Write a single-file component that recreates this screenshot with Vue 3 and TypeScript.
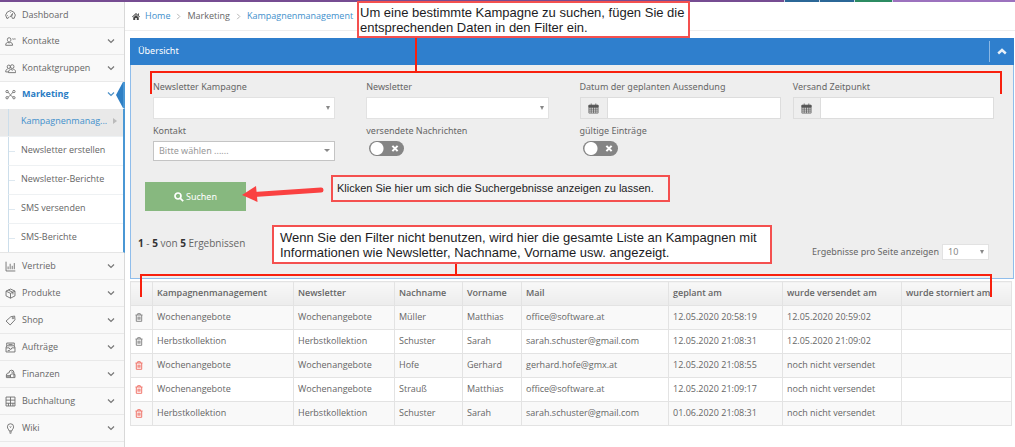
<script setup lang="ts">
import { ref } from 'vue'

interface NavItem { id: string; label: string }
interface Row { sent: boolean; cells: string[] }

const navTop: NavItem[] = [
  { id: 'dashboard', label: 'Dashboard' },
  { id: 'contact', label: 'Kontakte' },
  { id: 'group', label: 'Kontaktgruppen' },
  { id: 'marketing', label: 'Marketing' },
]
const subItems: string[] = ['Kampagnenmanag...', 'Newsletter erstellen', 'Newsletter-Berichte', 'SMS versenden', 'SMS-Berichte']
const navBottom: NavItem[] = [
  { id: 'sales', label: 'Vertrieb' },
  { id: 'product', label: 'Produkte' },
  { id: 'shop', label: 'Shop' },
  { id: 'orders', label: 'Aufträge' },
  { id: 'finance', label: 'Finanzen' },
  { id: 'accounting', label: 'Buchhaltung' },
  { id: 'wiki', label: 'Wiki' },
]
const icons: Record<string, string> = {
  dashboard: 'M4.500 13.500H2.6A6.8 6.8 0 1 1 13.400 13.500H10.500M4.500 13.500a2 2 0 0 1 2-2M10.500 13.500a2 2 0 0 0-1-2L11 6.500 7.600 11.500M3.200 9.500h1M8 4.200v1',
  contact: 'M6 2.5a2.6 2.8 0 0 1 2.6 2.8C8.600 7 7.500 8.600 6 8.600S3.400 7 3.400 5.300A2.600 2.800 0 0 1 6 2.500M1 13.500c0-3 1.500-4 3.500-4.600L6 10.500l1.500-1.600c2 .6 3.500 1.600 3.500 4.600zM10.500 4.500c1-1.500 2 1 3 0s1.500 0 2 0',
  group: 'M5.500 3a2.300 2.500 0 1 1 0 5 2.300 2.500 0 1 1 0-5M1 13c0-3 1.500-4 3-4.500M10.500 2.500a2.500 2.700 0 1 1 0 5.500 2.500 2.700 0 1 1 0-5.500M5 14c0-3.500 2-4.500 3.500-5l2 1.500 2-1.500c2 .8 3 2 3 5zM1 13h4',
  marketing: 'M3 2a1.700 1.700 0 1 1 0 3.400A1.700 1.700 0 0 1 3 2M13 2a1.700 1.700 0 1 1 0 3.400A1.700 1.700 0 0 1 13 2M3 11a1.700 1.700 0 1 1 0 3.400A1.700 1.700 0 0 1 3 11M13 11a1.700 1.700 0 1 1 0 3.400A1.700 1.700 0 0 1 13 11M4.500 4.500C6 5.500 6 7.500 8 8.500M11.500 4.500C10 5.500 10 7.500 8 8.500M4.500 11.500C6 11.500 7 10 8 8.500M11.500 11.500C10 11.500 9 10 8 8.500',
  sales: 'M1.500 1v13.500H15M4.500 12V8M7.500 12V4M10.500 12V7M13.500 12V3',
  product: 'M8 1.500 14.500 4.500v7L8 14.800 1.500 11.500v-7zM1.500 4.500 8 7.800l6.500-3.300M8 7.800v7M4.800 3 11.500 6.300v3',
  shop: 'M8.500 2.500 14 1.500 14.500 7 7.500 14.500 1.500 8.800zM11.500 3.500a1 1 0 1 1 0 2 1 1 0 0 1 0-2',
  orders: 'M2.500 1.500h11v4h-11zM5 3.500h6M2.500 5.500 1.500 8v6.500h13V8l-1-2.500M1.500 8.500H6l1 2h2l1-2h4.500M4 12.500h3',
  finance: 'M6 5.500a3.500 3.500 0 0 1 7-.5v6.500M6 5.500a4 4 0 0 0-4 3v4h12.500V8M2 8.500c2 1.500 5 1.500 6 0s3-2 6.500-.5M2 10.500h6M8 8.500v4M9 4c1 1 3 1 4 0',
  accounting: 'M1.500 1.500h13v13h-13zM1.500 6h13M1.500 10.500h13M8 1.500v13M5 10.500v4M11.500 10.500v4',
  wiki: 'M6 11.500C6 9.500 3.500 8.500 3.500 5.600a4.500 4.500 0 0 1 9 0c0 2.900-2.500 3.900-2.500 5.900zM6 13h4M6.800 14.800h2.400M7 5l1 1.500L9 5',
}
const columns = ['', 'Kampagnenmanagement', 'Newsletter', 'Nachname', 'Vorname', 'Mail', 'geplant am', 'wurde versendet am', 'wurde storniert am']
const rows: Row[] = [
  { sent: true, cells: ['Wochenangebote', 'Wochenangebote', 'Müller', 'Matthias', 'office@software.at', '12.05.2020 20:58:19', '12.05.2020 20:59:02', ''] },
  { sent: true, cells: ['Herbstkollektion', 'Herbstkollektion', 'Schuster', 'Sarah', 'sarah.schuster@gmail.com', '12.05.2020 21:08:31', '12.05.2020 21:09:02', ''] },
  { sent: false, cells: ['Wochenangebote', 'Wochenangebote', 'Hofe', 'Gerhard', 'gerhard.hofe@gmx.at', '12.05.2020 21:08:55', 'noch nicht versendet', ''] },
  { sent: false, cells: ['Wochenangebote', 'Wochenangebote', 'Strauß', 'Matthias', 'office@software.at', '12.05.2020 21:09:17', 'noch nicht versendet', ''] },
  { sent: false, cells: ['Herbstkollektion', 'Herbstkollektion', 'Schuster', 'Sarah', 'sarah.schuster@gmail.com', '01.06.2020 21:08:31', 'noch nicht versendet', ''] },
]
const sentMessages = ref(false)
const validEntries = ref(false)
</script>

<template>
  <div class="page">
    <div class="topbar"><i class="t-purple"></i><i class="t-blue"></i><i class="t-blue"></i><i class="t-green"></i><i class="t-lilac"></i></div>
    <div class="layout">
      <nav class="sidebar">
        <a v-for="n in navTop" :key="n.id" href="#" class="nav" :class="{ current: n.id === 'marketing', first: n.id === 'dashboard' }">
          <svg class="nav-icon" viewBox="0 0 16 16"><path :d="icons[n.id]" /></svg>
          <span>{{ n.label }}</span>
          <svg v-if="n.id !== 'dashboard'" class="chev" viewBox="0 0 8 6"><path d="M1 1.500 4 4.500 7 1.500" /></svg>
        </a>
        <div class="submenu">
          <a v-for="(s, i) in subItems" :key="s" href="#" class="sub" :class="{ active: i === 0 }">
            <span>{{ s }}</span>
            <svg v-if="i === 0" class="tri" viewBox="0 0 4 6"><path d="M0 0 4 3 0 6z" /></svg>
          </a>
        </div>
        <a v-for="n in navBottom" :key="n.id" href="#" class="nav">
          <svg class="nav-icon" viewBox="0 0 16 16"><path :d="icons[n.id]" /></svg>
          <span>{{ n.label }}</span>
          <svg class="chev" viewBox="0 0 8 6"><path d="M1 1.500 4 4.500 7 1.500" /></svg>
        </a>
      </nav>

      <main class="main">
        <div class="crumbs">
          <svg class="home" viewBox="0 0 16 14"><path d="M8 0 16 7.500 14.800 8.700 8 2.500 1.200 8.700 0 7.500zM8 4l5.500 5v5H9.500v-4h-3v4h-4V9zM12 1h2v4l-2-2z" /></svg>
          <a href="#">Home</a>
          <svg class="sep" viewBox="0 0 5 8"><path d="M1 1 4 4 1 7" /></svg>
          <span>Marketing</span>
          <svg class="sep" viewBox="0 0 5 8"><path d="M1 1 4 4 1 7" /></svg>
          <a href="#">Kampagnenmanagement</a>
        </div>

        <section class="panel">
          <header class="panel-head">
            <h1>Übersicht</h1>
            <button type="button" class="collapse" aria-label="Einklappen">
              <svg viewBox="0 0 10 7"><path d="M1.200 5.500 5 2l3.800 3.500" /></svg>
            </button>
          </header>
          <form class="panel-body" @submit.prevent>
            <div class="fields">
              <div class="field">
                <label for="campaign">Newsletter Kampagne</label>
                <div class="select"><select id="campaign"><option></option></select></div>
              </div>
              <div class="field">
                <label for="newsletter">Newsletter</label>
                <div class="select"><select id="newsletter"><option></option></select></div>
              </div>
              <div class="field">
                <label for="planned">Datum der geplanten Aussendung</label>
                <div class="date">
                  <span class="addon"><svg viewBox="0 0 12 12"><path d="M1 2.500h10v8.500H1zM1 4.500h10M1 6.700h10M1 8.800h10M3.500 4.500V11M6 4.500V11M8.500 4.500V11M3.500.5v3M8.500.5v3" /><path d="M1 2.500h10v2H1z" class="solid" /></svg></span>
                  <input id="planned" type="text" />
                </div>
              </div>
              <div class="field">
                <label for="sendtime">Versand Zeitpunkt</label>
                <div class="date">
                  <span class="addon"><svg viewBox="0 0 12 12"><path d="M1 2.500h10v8.500H1zM1 4.500h10M1 6.700h10M1 8.800h10M3.500 4.500V11M6 4.500V11M8.500 4.500V11M3.500.5v3M8.500.5v3" /><path d="M1 2.500h10v2H1z" class="solid" /></svg></span>
                  <input id="sendtime" type="text" />
                </div>
              </div>
              <div class="field">
                <label for="contact">Kontakt</label>
                <div class="select chosen"><select id="contact"><option>Bitte wählen ......</option></select></div>
              </div>
              <div class="field">
                <label for="sent">versendete Nachrichten</label>
                <div class="switch">
                  <input id="sent" v-model="sentMessages" type="checkbox" />
                  <svg viewBox="0 0 8 8"><path d="M1 1 7 7M7 1 1 7" /></svg>
                </div>
              </div>
              <div class="field">
                <label for="valid">gültige Einträge</label>
                <div class="switch">
                  <input id="valid" v-model="validEntries" type="checkbox" />
                  <svg viewBox="0 0 8 8"><path d="M1 1 7 7M7 1 1 7" /></svg>
                </div>
              </div>
            </div>
            <button type="submit" class="search">
              <svg viewBox="0 0 10 10"><circle cx="4" cy="4" r="3" /><path d="M6.300 6.300 9.200 9.200" /></svg>Suchen
            </button>
            <div class="summary">
              <div class="count"><b>1</b> - <b>5</b> von <b>5</b> Ergebnissen</div>
              <div class="perpage">
                <label for="perpage">Ergebnisse pro Seite anzeigen</label>
                <div class="select small"><select id="perpage"><option>10</option></select></div>
              </div>
            </div>
          </form>
        </section>

        <table class="grid">
          <colgroup><col v-for="(c, i) in columns" :key="i" :class="'c' + i" /></colgroup>
          <thead>
            <tr><th v-for="(c, i) in columns" :key="i">{{ c }}</th></tr>
          </thead>
          <tbody>
            <tr v-for="(r, i) in rows" :key="i">
              <td class="del">
                <button type="button" :class="{ red: !r.sent }" aria-label="Löschen">
                  <svg viewBox="0 0 8 9"><path d="M0.500 2h7M2.700 2V.7h2.600V2M1.300 2v6.300h5.400V2M3 3.700v3M4 3.700v3M5 3.700v3" /></svg>
                </button>
              </td>
              <td v-for="(c, j) in r.cells" :key="j">{{ c }}</td>
            </tr>
          </tbody>
        </table>

        <div class="bracket upper"></div>
        <div class="stem upper-stem"></div>
        <div class="bracket lower"></div>
        <div class="stem lower-stem"></div>
        <p class="note note-filter">Um eine bestimmte Kampagne zu suchen, fügen Sie die<br />entsprechenden Daten in den Filter ein.</p>
        <p class="note note-search">Klicken Sie hier um sich die Suchergebnisse anzeigen zu lassen.</p>
        <p class="note note-list">Wenn Sie den Filter nicht benutzen, wird hier die gesamte Liste an Kampagnen mit<br />Informationen wie Newsletter, Nachname, Vorname usw. angezeigt.</p>
        <svg class="arrow" viewBox="0 0 84 18"><path d="M12 10.500 79 6" class="shaft" /><path d="M0 11 14 2 15.500 18z" class="tip" /></svg>
      </main>
    </div>
  </div>
</template>

<style>
body { background: #fff; }
</style>

<style scoped>
* { box-sizing: border-box; }
.page { font: 9px/16px "Noto Sans", "Open Sans", sans-serif; color: #666; height: 100vh; overflow: hidden; display: flex; flex-direction: column; }
a { text-decoration: none; color: #4190cc; }
button, input, select { font: inherit; color: inherit; border-radius: 0; margin: 0; }
svg { fill: none; stroke: currentColor; flex: none; }

.topbar { display: flex; height: 2px; gap: 1px; flex: none; background: #cbd5e2; }
.t-purple { flex: 1; background: #764c92; }
.t-blue { width: 34px; background: #2b6797; }
.t-green { width: 37px; background: #2c8b62; }
.t-lilac { width: 122px; background: #9c72be; }

.layout { display: flex; flex: 1; min-height: 0; }
.sidebar { width: 125px; flex: none; background: #f9f9f9; border-right: 1px solid #d8d8d8; font-family: "Open Sans", "Noto Sans", sans-serif; }
.nav { display: flex; align-items: center; height: 27px; padding: 0 9px 0 5px; border-bottom: 1px solid #e9e9e9; color: #666; }
.nav.first { height: 26px; }
.nav span { flex: 1; padding-left: 6px; }
.nav-icon { width: 11px; height: 11px; stroke-width: 1.300; color: #6c6c6c; }
.chev { width: 8px; height: 6px; color: #777; stroke-width: 1.200; }
.nav.current { position: relative; margin-right: -1px; padding: 0 8px 2px 5px; background: #fff; border-bottom-color: #fff; border-right: 2px solid #4a97d4; }
.nav.current span { color: #2a7cc4; font-weight: 700; }
.nav.current .chev { color: #4a90c8; }
.nav.current::after { content: ""; position: absolute; right: 0; top: 0; border: solid transparent; border-width: 13px 7px 13px 0; border-right-color: #2f7fc4; }
.submenu { margin-right: -1px; background: #fff; border-right: 2px solid #4a97d4; border-bottom: 1px solid #e5e5e5; }
.sub { display: flex; align-items: center; justify-content: space-between; height: 29px; margin-left: 8px; padding: 0 6px 3px 12px; color: #666; border-left: 1px solid #ccdeeb; border-bottom: 1px solid #eef1f3; background: linear-gradient(#dde8f0, #dde8f0) 0 center / 6px 1px no-repeat; }
.sub:last-child { border-bottom: 0; height: 28px; }
.sub.active { height: 28px; margin-left: 0; padding-left: 21px; border-left: 0; color: #4190cc; background: linear-gradient(90deg, transparent 8px, #ccdeeb 8px, #ccdeeb 9px, transparent 9px), #e9e9e9; }
.tri { width: 4px; height: 6px; fill: #bbb; stroke: none; }

.main { position: relative; flex: 1; min-width: 0; padding: 0 1px 0 5px; }
.crumbs { display: flex; align-items: center; height: 29px; margin: 0 -1px 7px -5px; padding-left: 7px; border-bottom: 1px solid #eee; font-family: "Open Sans", "Noto Sans", sans-serif; }
.home { width: 8px; height: 7px; margin-right: 5px; fill: #444; stroke: none; }
.sep { width: 5px; height: 7px; margin: 0 6px; color: #aaa; }

.panel-head { display: flex; align-items: center; height: 27px; background: #2f7fcd; color: #fff; }
.panel-head h1 { flex: 1; margin: 0; padding: 0 0 2px 8px; font-size: 9px; font-weight: 400; }
.collapse { display: flex; align-items: center; justify-content: center; width: 25px; height: 21px; padding: 0; border: 0; border-left: 1px solid #8ab7e4; background: none; }
.collapse svg { width: 10px; height: 7px; stroke-width: 2.400; color: #e8f0f8; }
.panel-body { padding: 14px 7px 18px; background: #eee; border: 1px solid #8fbdeb; border-top: 0; }
.fields { display: grid; grid-template-columns: repeat(4, 1fr); row-gap: 4px; margin: 0 0 0 15px; }
.field { padding-right: 12px; }
.field label { display: block; margin-bottom: 2px; }
.select { position: relative; width: calc(100% - 19px); height: 22px; }
.select select { display: block; width: 100%; height: 100%; padding: 0 6px; appearance: none; border: 1px solid #e2e2e2; background: #fff; }
.select::after { content: ""; position: absolute; right: 5px; top: 50%; border: solid transparent; border-width: 4px 2px 0; border-top-color: #888; margin-top: -2px; pointer-events: none; }
.select.chosen { height: 20px; }
.select.chosen select { padding: 0 5px; border-color: #c4c4c4; color: #999; }
.select.chosen::after { border-width: 3px 3px 0; }
.date { display: flex; height: 22px; border: 1px solid #ddd; }
.addon { display: flex; align-items: center; justify-content: center; width: 27px; border-right: 1px solid #ddd; color: #555; }
.addon svg { width: 11px; height: 11px; stroke-width: 0.800; }
.solid { fill: #555; }
.date input { flex: 1; min-width: 0; border: 0; padding: 0 6px; background: #fff; }
.switch { position: relative; width: 35px; height: 15px; margin-left: 3px; }
.switch input { display: block; appearance: none; width: 35px; height: 15px; border-radius: 8px; background: radial-gradient(circle at 8px 50%, #fff 6px, transparent 7px), #858585; }
.switch svg { position: absolute; right: 5px; top: 4px; width: 8px; height: 7px; stroke-width: 2.400; color: #fff; pointer-events: none; }
.search { display: flex; align-items: center; justify-content: center; width: 101px; height: 29px; margin: 21px 0 24px 7px; padding: 0; border: 0; background: #87b87f; color: #fff; }
.search svg { width: 10px; height: 10px; margin-right: 2px; stroke-width: 1.700; }
.summary { display: flex; justify-content: space-between; align-items: flex-start; }
.count { font-size: 10px; font-family: "Open Sans", "Noto Sans", sans-serif; }
.summary b { color: #333; }
.perpage { display: flex; align-items: center; gap: 3px; padding: 9px 17px 0 0; }
.select.small { width: 47px; height: 16px; }
.select.small select { padding: 0 5px; line-height: 14px; color: #888; }

.grid { width: calc(100% - 2px); margin-top: 2px; border-collapse: collapse; table-layout: fixed; font-family: "Open Sans", "Noto Sans", sans-serif; line-height: 12px; }
.grid th, .grid td { height: 24px; padding: 0 0 1px 4px; border: 1px solid #e3e3e3; text-align: left; white-space: nowrap; }
.grid th { padding-bottom: 2px; font-weight: 600; background: linear-gradient(#f8f8f8, #ececec); }
.grid tbody tr:nth-child(odd) { background: #f9f9f9; }
.c0 { width: 22px; } .c1 { width: 141px; } .c2 { width: 101px; } .c3 { width: 68px; } .c4 { width: 59px; }
.c5 { width: 147px; } .c6 { width: 114px; } .c7 { width: 119px; }
.del button { display: block; padding: 0; border: 0; background: none; color: #888; }
.del button.red { color: #f0766c; }
.del svg { display: block; width: 8px; height: 9px; }

.note { position: absolute; margin: 0; border: 2px solid #f4504f; color: #1c1c24; font: 13px/15px "Liberation Sans", Arial, sans-serif; white-space: nowrap; background: #fff; }
.note-filter { left: 232px; top: -1px; width: 333px; padding: 2px 1px 1px; }
.note-search { left: 206px; top: 173px; width: 339px; padding: 4px; font-size: 11px; background: #f3f3f3; }
.note-list { left: 147px; top: 223px; width: 500px; padding: 3px 6px 2px; }
.bracket { position: absolute; height: 23px; border: 2px solid #f8200e; border-bottom: 0; }
.upper { left: 25px; right: 13px; top: 69px; }
.lower { left: 15px; right: 23px; top: 272px; }
.stem { position: absolute; width: 2px; background: #f8200e; }
.upper-stem { left: 290px; top: 33px; height: 37px; }
.lower-stem { left: 330px; top: 259px; height: 14px; }
.arrow { position: absolute; left: 117px; top: 182px; width: 84px; height: 18px; stroke: none; }
.shaft { stroke: #fa4141; stroke-width: 5; stroke-linecap: round; }
.tip { fill: #fa4141; }
</style>
